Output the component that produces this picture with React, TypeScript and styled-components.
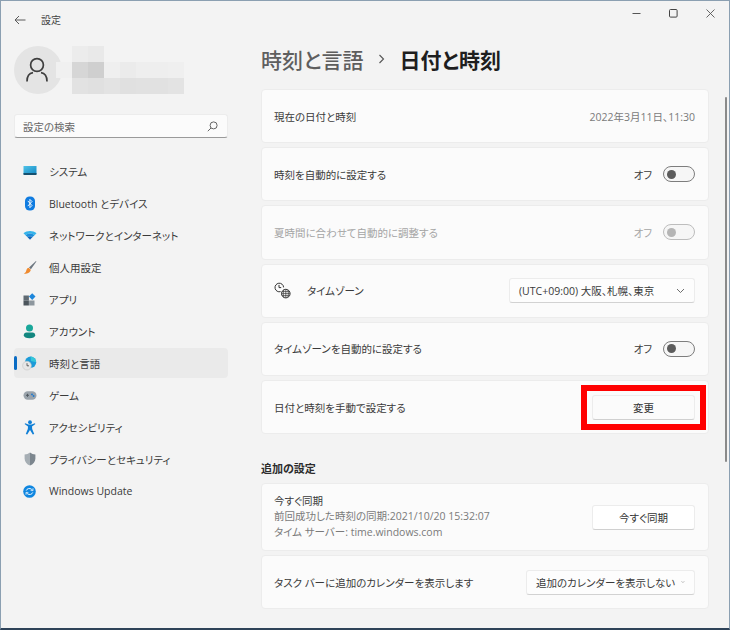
import { ReactNode } from 'react';
import styled, { createGlobalStyle } from 'styled-components';

const FONT = `"Open Sans", "Noto Sans CJK JP", sans-serif`;

const GlobalStyle = createGlobalStyle`
  html, body {
    margin: 0;
    padding: 0;
    width: 730px;
    height: 630px;
    overflow: hidden;
    background: #ffffff;
    font-family: ${FONT};
    font-feature-settings: "palt";
  }
`;

const mosaic = [
  ['transparent', '#ececec', '#e9e9e9', 'transparent', 'transparent', 'transparent', 'transparent', 'transparent'],
  ['#f0f0f0', '#d6d6d6', '#cfcfcf', '#efefef', '#ebebeb', '#eeeeee', '#eeeeee', '#efefef'],
  ['transparent', '#e2e2e2', '#e0e0e0', '#e3e3e3', '#e0e0e0', '#e1e1e1', '#e1e1e1', '#e3e3e3'],
];

const SystemIcon = () => (
  <svg width="14" height="12" viewBox="0 0 14 12">
    <defs>
      <linearGradient id="sys" x1="0" y1="0" x2="1" y2="1">
        <stop offset="0" stopColor="#4fc3e8" />
        <stop offset="1" stopColor="#1488c4" />
      </linearGradient>
    </defs>
    <rect x="0.5" y="1" width="13" height="8" fill="url(#sys)" />
    <rect x="0.5" y="8" width="13" height="2" fill="#15506f" />
  </svg>
);

const BluetoothIcon = () => (
  <svg width="12" height="15" viewBox="0 0 12 15">
    <rect x="1" y="0.5" width="10" height="14" rx="4.6" fill="#0f7be0" />
    <path d="M3.8 4.9l4.2 4.6-2.1 2.2V3.4L8 5.5 3.8 10.1" fill="none" stroke="#fff" strokeWidth="0.9" />
  </svg>
);

const WifiIcon = () => (
  <svg width="14" height="12" viewBox="0 0 14 12">
    <path d="M0.5 4.2C4 1.1 10 1.1 13.5 4.2L11.5 6.2C8.9 4 5.1 4 2.5 6.2Z" fill="#35b4ea" />
    <path d="M2.5 6.2C5.1 4 8.9 4 11.5 6.2L9.6 8.1C8 6.9 6 6.9 4.4 8.1Z" fill="#1a8fdc" />
    <path d="M4.4 8.1C6 6.9 8 6.9 9.6 8.1L7 10.8Z" fill="#0f63b8" />
  </svg>
);

const BrushIcon = () => (
  <svg width="14" height="15" viewBox="0 0 14 15">
    <path d="M13 1L6 7.4 7.9 9.3 13.4 1.5Z" fill="#6c7680" />
    <path d="M5.6 7.8C3.6 8.1 3.6 10 3 11.4 2.6 12.3 1.6 13 0.8 13.4 3 14 6 13.6 7.4 11 7.8 10.2 7.8 9.6 7.5 9.4Z" fill="#ef8a2e" />
  </svg>
);

const AppsIcon = () => (
  <svg width="13" height="13" viewBox="0 0 13 13">
    <rect x="0.5" y="2.5" width="5.4" height="5" fill="#5f6a72" />
    <rect x="0.5" y="7.5" width="5.4" height="5" fill="#4c555c" />
    <rect x="6.1" y="7.5" width="5.4" height="5" fill="#8d979e" />
    <path d="M9.2 0.3L12.5 3.6 9.2 6.9 5.9 3.6Z" fill="#1d86db" />
  </svg>
);

const AccountIcon = () => (
  <svg width="13" height="15" viewBox="0 0 13 15">
    <circle cx="6.5" cy="4" r="3.5" fill="#1aa79a" />
    <path d="M0.8 11.2C0.8 9.4 2 8.6 3.4 8.6H9.6C11 8.6 12.2 9.4 12.2 11.2 12.2 13.2 9.8 14.2 6.5 14.2 3.2 14.2 0.8 13.2 0.8 11.2Z" fill="#12867f" />
  </svg>
);

const TimeIcon = () => (
  <svg width="15" height="15" viewBox="0 0 15 15">
    <circle cx="8.6" cy="6.2" r="5.6" fill="#1c9bd8" />
    <path d="M8.6 0.6A5.6 5.6 0 0 1 14.2 6.2L9 5Z" fill="#35c6d8" />
    <circle cx="5" cy="9.6" r="4.4" fill="#e6e6e6" stroke="#bdbdbd" strokeWidth="0.5" />
    <path d="M5 7.2V9.8H7" fill="none" stroke="#444" strokeWidth="0.8" />
  </svg>
);

const GameIcon = () => (
  <svg width="14" height="11" viewBox="0 0 14 11">
    <rect x="0.5" y="1.2" width="13" height="8.6" rx="4.2" fill="#9aa3ab" />
    <rect x="3" y="4.8" width="3" height="1" fill="#4f585f" />
    <rect x="4" y="3.8" width="1" height="3" fill="#4f585f" />
    <circle cx="9" cy="4.4" r="0.9" fill="#1a78d0" />
    <circle cx="10.6" cy="6" r="0.9" fill="#1a78d0" />
  </svg>
);

const AccessIcon = () => (
  <svg width="12" height="15" viewBox="0 0 12 15">
    <circle cx="6" cy="2.2" r="1.9" fill="#0f7fd6" />
    <path d="M0.6 4L1.2 3.2 4.4 4.6H7.6L10.8 3.2 11.4 4 8 6.4 8.2 9 10.2 14 8.8 14.6 6 10 3.2 14.6 1.8 14 3.8 9 4 6.4Z" fill="#0f7fd6" />
  </svg>
);

const ShieldIcon = () => (
  <svg width="12" height="14" viewBox="0 0 12 14">
    <path d="M6 0.6C7.6 1.9 9.4 2.4 11.4 2.5V6.4C11.4 9.8 9.2 12.2 6 13.4Z" fill="#7c868e" />
    <path d="M6 0.6C4.4 1.9 2.6 2.4 0.6 2.5V6.4C0.6 9.8 2.8 12.2 6 13.4Z" fill="#a6aeb4" />
  </svg>
);

const UpdateIcon = () => (
  <svg width="13" height="13" viewBox="0 0 13 13">
    <circle cx="6.5" cy="6.5" r="6.3" fill="#0f86e0" />
    <path d="M3.2 5.6C3.8 3.6 6.6 2.8 8.6 4.2L9.6 5.2M9.8 7.4C9.2 9.4 6.4 10.2 4.4 8.8L3.4 7.8" fill="none" stroke="#fff" strokeWidth="0.9" />
    <path d="M10 3.2V5.6H7.6M3 9.8V7.4H5.4" fill="none" stroke="#fff" strokeWidth="0.7" />
  </svg>
);

const TimeZoneIcon = () => (
  <svg width="18" height="18" viewBox="0 0 18 18" fill="none" stroke="#333" strokeWidth="1">
    <path d="M6.6 9.6A4.3 4.3 0 1 1 9.6 5.4" />
    <path d="M5 2.9V5.6H7.2" />
    <circle cx="11.8" cy="11.6" r="4.3" />
    <path d="M7.5 11.6H16.1M11.8 7.3V15.9M9.9 7.8C9 10.4 9 12.8 9.9 15.4M13.7 7.8C14.6 10.4 14.6 12.8 13.7 15.4M8 9.6H15.6M8 13.6H15.6" strokeWidth="0.7" />
  </svg>
);

const navItems: { label: string; icon: ReactNode; active?: boolean }[] = [
  { label: 'システム', icon: <SystemIcon /> },
  { label: 'Bluetooth とデバイス', icon: <BluetoothIcon /> },
  { label: 'ネットワークとインターネット', icon: <WifiIcon /> },
  { label: '個人用設定', icon: <BrushIcon /> },
  { label: 'アプリ', icon: <AppsIcon /> },
  { label: 'アカウント', icon: <AccountIcon /> },
  { label: '時刻と言語', icon: <TimeIcon />, active: true },
  { label: 'ゲーム', icon: <GameIcon /> },
  { label: 'アクセシビリティ', icon: <AccessIcon /> },
  { label: 'プライバシーとセキュリティ', icon: <ShieldIcon /> },
  { label: 'Windows Update', icon: <UpdateIcon /> },
];

const Chevron = () => (
  <svg width="9" height="6" viewBox="0 0 9 6" fill="none" stroke="#5d5d5d" strokeWidth="0.9">
    <path d="M1 1l3.5 3.5L8 1" />
  </svg>
);

function ToggleRow({ label, disabled }: { label: string; disabled?: boolean }) {
  return (
    <Card>
      <RowLabel $disabled={disabled}>{label}</RowLabel>
      <ToggleWrap>
        <ToggleText $disabled={disabled}>オフ</ToggleText>
        <Toggle $disabled={disabled}>
          <Knob $disabled={disabled} />
        </Toggle>
      </ToggleWrap>
    </Card>
  );
}

export default function App() {
  return (
    <>
      <GlobalStyle />
      <Window>
        <TitleBar>
          <TitleLeft>
            <svg width="12" height="10" viewBox="0 0 12 10" fill="none" stroke="#5a5a5a" strokeWidth="1">
              <path d="M11.5 5H1M5 1L1 5l4 4" />
            </svg>
            <AppTitle>設定</AppTitle>
          </TitleLeft>
          <WindowButtons>
            <svg width="9" height="9" viewBox="0 0 9 9" fill="none" stroke="#555" strokeWidth="1">
              <path d="M0.5 4.5h8" />
            </svg>
            <svg width="9" height="9" viewBox="0 0 9 9" fill="none" stroke="#444" strokeWidth="1">
              <rect x="0.5" y="0.5" width="7.6" height="7.6" rx="1" />
            </svg>
            <svg width="9" height="9" viewBox="0 0 9 9" fill="none" stroke="#555" strokeWidth="0.9">
              <path d="M0.5 0.5l8 8M8.5 0.5l-8 8" />
            </svg>
          </WindowButtons>
        </TitleBar>
        <Body>
          <Sidebar>
            <Profile>
              <Avatar>
                <svg width="22" height="26" viewBox="0 0 22 26" fill="none" stroke="#3f3f3f" strokeWidth="1.7">
                  <circle cx="11" cy="8" r="6.4" />
                  <path d="M1 24.5C1 18.6 4 16 7 15.6M21 24.5C21 18.6 18 16 15 15.6" />
                </svg>
              </Avatar>
              <Mosaic>
                {mosaic.flat().map((c, i) => (
                  <MosaicCell key={i} $c={c} />
                ))}
              </Mosaic>
            </Profile>
            <Search>
              <SearchText>設定の検索</SearchText>
              <svg width="11" height="11" viewBox="0 0 11 11" fill="none" stroke="#555" strokeWidth="0.9">
                <circle cx="6.6" cy="4.4" r="3.5" />
                <path d="M4 7L0.8 10.2" />
              </svg>
            </Search>
            <Nav>
              {navItems.map((n) => (
                <NavItem key={n.label} $active={n.active}>
                  <NavIcon>{n.icon}</NavIcon>
                  <span>{n.label}</span>
                </NavItem>
              ))}
            </Nav>
          </Sidebar>
          <Main>
            <Breadcrumb>
              <Parent>時刻と言語</Parent>
              <svg width="8" height="10" viewBox="0 0 8 10" fill="none" stroke="#555" strokeWidth="1.1">
                <path d="M1.5 1l4 4-4 4" />
              </svg>
              <Current>日付と時刻</Current>
            </Breadcrumb>
            <Cards>
              <Card>
                <RowLabel>現在の日付と時刻</RowLabel>
                <Muted>2022年3月11日、11:30</Muted>
              </Card>
              <ToggleRow label="時刻を自動的に設定する" />
              <ToggleRow label="夏時間に合わせて自動的に調整する" disabled />
              <Card>
                <ZoneLabel>
                  <TimeZoneIcon />
                  <RowLabel>タイムゾーン</RowLabel>
                </ZoneLabel>
                <Select>
                  <span>(UTC+09:00) 大阪、札幌、東京</span>
                  <Chevron />
                </Select>
              </Card>
              <ToggleRow label="タイムゾーンを自動的に設定する" />
              <Card>
                <RowLabel>日付と時刻を手動で設定する</RowLabel>
                <Highlighted>
                  <Button>変更</Button>
                  <RedFrame />
                </Highlighted>
              </Card>
            </Cards>
            <SectionTitle>追加の設定</SectionTitle>
            <Cards>
              <Card $tall>
                <SyncText>
                  <RowLabel>今すぐ同期</RowLabel>
                  <Muted>前回成功した時刻の同期:2021/10/20 15:32:07</Muted>
                  <Muted>タイム サーバー: time.windows.com</Muted>
                </SyncText>
                <Button $white>今すぐ同期</Button>
              </Card>
              <Card>
                <RowLabel>タスク バーに追加のカレンダーを表示します</RowLabel>
                <Select $narrow>
                  <span>追加のカレンダーを表示しない</span>
                  <Chevron />
                </Select>
              </Card>
            </Cards>
          </Main>
          <ScrollTrack>
            <ScrollThumb />
          </ScrollTrack>
        </Body>
      </Window>
    </>
  );
}

const Window = styled.div`
  box-sizing: border-box;
  width: 730px;
  height: 630px;
  display: flex;
  flex-direction: column;
  background: #f3f3f3;
  border: 1px solid #8b9fb1;
  border-bottom: 2px solid #2e4258;
  color: #333;
`;

const TitleBar = styled.div`
  height: 29px;
  flex: none;
  display: flex;
  align-items: center;
  justify-content: space-between;
`;

const TitleLeft = styled.div`
  display: flex;
  align-items: center;
  gap: 15px;
  padding: 8px 0 0 13px;
`;

const AppTitle = styled.span`
  font-size: 10px;
  color: #444;
`;

const WindowButtons = styled.div`
  display: flex;
  align-items: center;
  gap: 28px;
  padding: 0 14px 4px 0;
`;

const Body = styled.div`
  flex: 1;
  display: flex;
  min-height: 0;
`;

const Sidebar = styled.div`
  width: 227px;
  flex: none;
  padding: 16px 0 0 13px;
  box-sizing: border-box;
`;

const Profile = styled.div`
  display: flex;
  height: 48px;
`;

const Avatar = styled.div`
  width: 48px;
  height: 48px;
  flex: none;
  border-radius: 50%;
  background: #e4e4e4;
  display: flex;
  align-items: center;
  justify-content: center;
  padding-right: 2px;
  box-sizing: border-box;
`;

const Mosaic = styled.div`
  display: grid;
  grid-template-columns: repeat(8, 16px);
  grid-auto-rows: 16px;
  margin-left: -6px;
  position: relative;
`;

const MosaicCell = styled.div<{ $c: string }>`
  background: ${(p) => p.$c};
`;

const Search = styled.div`
  margin-top: 20px;
  width: 214px;
  height: 24px;
  box-sizing: border-box;
  display: flex;
  align-items: center;
  justify-content: space-between;
  padding: 0 9px 0 8px;
  background: #fbfbfb;
  border: 1px solid #ececec;
  border-bottom: 1px solid #9a9a9a;
  border-radius: 3px;
`;

const SearchText = styled.span`
  font-size: 10.5px;
  color: #666;
`;

const Nav = styled.div`
  margin-top: 18px;
  display: flex;
  flex-direction: column;
  gap: 2px;
`;

const NavItem = styled.div<{ $active?: boolean }>`
  position: relative;
  width: 214px;
  height: 30px;
  display: flex;
  align-items: center;
  border-radius: 4px;
  font-size: 10.5px;
  color: #3a3a3a;
  background: ${(p) => (p.$active ? '#eaeaea' : 'transparent')};

  &::before {
    content: '';
    display: ${(p) => (p.$active ? 'block' : 'none')};
    position: absolute;
    left: 0;
    top: 8px;
    width: 2.5px;
    height: 14px;
    border-radius: 2px;
    background: #0a6cc4;
  }
`;

const NavIcon = styled.span`
  width: 17px;
  margin: 0 11px 0 7px;
  display: flex;
  justify-content: center;
`;

const Main = styled.div`
  flex: 1;
  min-width: 0;
  padding: 13px 8px 0 33px;
`;

const Breadcrumb = styled.div`
  display: flex;
  align-items: center;
  height: 32px;
  gap: 14px;
`;

const Parent = styled.span`
  font-size: 21px;
  font-weight: 500;
  color: #5e5e5e;
`;

const Current = styled.span`
  font-size: 21px;
  font-weight: 700;
  color: #1e1e1e;
`;

const Cards = styled.div`
  display: flex;
  flex-direction: column;
  gap: 4px;
  margin-top: 14px;
`;

const Card = styled.div<{ $tall?: boolean }>`
  box-sizing: border-box;
  height: ${(p) => (p.$tall ? '68px' : '54.2px')};
  display: flex;
  align-items: center;
  justify-content: space-between;
  padding: 0 13px 0 12px;
  background: #fbfbfb;
  border: 1px solid #ececec;
  border-radius: 4px;
`;

const RowLabel = styled.span<{ $disabled?: boolean }>`
  font-size: 10.5px;
  color: ${(p) => (p.$disabled ? '#a5a5a5' : '#3a3a3a')};
`;

const Muted = styled.span`
  font-size: 10.5px;
  color: #7a7a7a;
`;

const ToggleWrap = styled.div`
  display: flex;
  align-items: center;
  gap: 11px;
`;

const ToggleText = styled.span<{ $disabled?: boolean }>`
  font-size: 10.5px;
  color: ${(p) => (p.$disabled ? '#a5a5a5' : '#3a3a3a')};
`;

const Toggle = styled.div<{ $disabled?: boolean }>`
  box-sizing: border-box;
  width: 32px;
  height: 16px;
  border-radius: 8px;
  border: 1px solid ${(p) => (p.$disabled ? '#bdbdbd' : '#7d7d7d')};
  background: #f6f6f6;
  display: flex;
  align-items: center;
  padding-left: 3px;
`;

const Knob = styled.div<{ $disabled?: boolean }>`
  width: 9px;
  height: 9px;
  border-radius: 50%;
  background: ${(p) => (p.$disabled ? '#b5b5b5' : '#5c5c5c')};
`;

const ZoneLabel = styled.div`
  display: flex;
  align-items: center;
  gap: 15px;
`;

const Select = styled.div<{ $narrow?: boolean }>`
  box-sizing: border-box;
  height: 25px;
  display: flex;
  align-items: center;
  justify-content: space-between;
  gap: 6px;
  width: ${(p) => (p.$narrow ? '169px' : '186px')};
  padding: 0 9px;
  font-size: 10.5px;
  white-space: nowrap;
  color: #3a3a3a;
  background: #fdfdfd;
  border: 1px solid #ececec;
  border-bottom-color: #d2d2d2;
  border-radius: 3px;
`;

const Highlighted = styled.div`
  position: relative;
  display: flex;
`;

const Button = styled.div<{ $white?: boolean }>`
  box-sizing: border-box;
  width: 103px;
  height: 25px;
  display: flex;
  align-items: center;
  justify-content: center;
  font-size: 10.5px;
  color: #333;
  background: ${(p) => (p.$white ? '#ffffff' : '#fbfbfb')};
  border: 1px solid #ececec;
  border-bottom-color: #d0d0d0;
  border-radius: 3px;
`;

const RedFrame = styled.div`
  position: absolute;
  left: -11px;
  top: -10px;
  width: 125px;
  height: 45px;
  box-sizing: border-box;
  border: 6px solid #ff0000;
`;

const SectionTitle = styled.div`
  margin-top: 27px;
  font-size: 11px;
  font-weight: 700;
  color: #2c2c2c;
  line-height: 16px;
  margin-bottom: -8px;
`;

const SyncText = styled.div`
  display: flex;
  flex-direction: column;
  line-height: 15.5px;
`;

const ScrollTrack = styled.div`
  width: 12px;
  flex: none;
  position: relative;
`;

const ScrollThumb = styled.div`
  position: absolute;
  left: 8px;
  top: 67px;
  width: 2px;
  height: 365px;
  background: #8a8a8a;
  border-radius: 1px;
`;
